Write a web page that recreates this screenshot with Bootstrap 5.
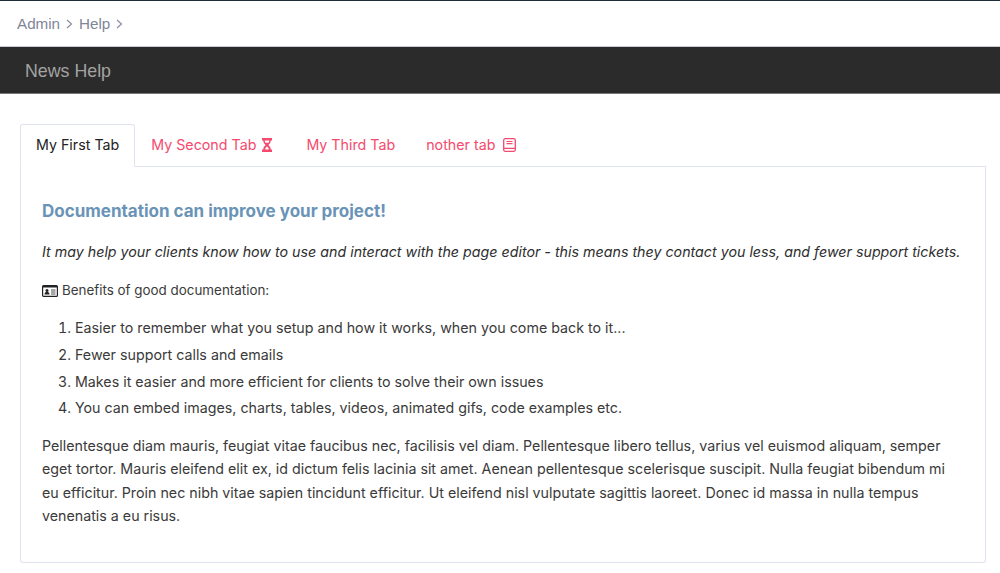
<!doctype html>
<html lang="en"><head><meta charset="utf-8">
<title>News Help</title>
<link href="https://cdn.jsdelivr.net/npm/bootstrap@5.3.0/dist/css/bootstrap.min.css" rel="stylesheet">
<style>
body{font-family:"Inter","Liberation Sans",sans-serif;font-size:14.25px;line-height:23.4px;color:#3a3a3a;background:#fff;overflow:hidden;height:573px}
.top-rule{height:1px;background:#1d2d3a}
.crumbs{height:45px;font-family:"Liberation Sans",sans-serif;font-size:15.2px;color:#7f8598;padding:1px 0 0 17px}
.crumbs svg{margin:0 6px 0 6px}
.head-bar{height:48px;background:#2b2b2b;border-top:1px solid #c9cdd3;border-bottom:1px solid #777;font-family:"Liberation Sans",sans-serif;font-size:17.8px;color:#a3a3a3;padding:4px 0 0 25px}
.page-wrap{padding:30px 14px 0 20px}
.tabs-row{--bs-nav-tabs-border-color:#dfe3ee;--bs-nav-tabs-link-active-border-color:#dfe3ee #dfe3ee #fff;--bs-nav-tabs-border-radius:3px}
.tabs-row .nav-link{color:#f44a6e;padding:6px 15px 8px;height:43px;line-height:25px;font-size:14.25px;border-width:1px;display:flex;align-items:center;gap:6px;margin-bottom:-1px}
.tabs-row .nav-link.active{color:#222}
.tabs-row .wait-tab{padding-right:17px}
.tabs-row .third-tab{padding-right:14px}
.tabs-row .book-tab{gap:8px}
.tab-box{border:1px solid #dfe3ee;border-top:0;border-radius:0 0 3px 3px;height:396px;padding:32px 20px 0 21px}
.doc-title{font-size:17px;font-weight:700;color:#6a94b7;line-height:24px;margin:0 0 17px}
.lede{font-style:italic;color:#2e2e2e;margin:0 0 16px}
.benefit{margin:0 0 13.500px;font-size:13.4px;display:flex;align-items:center;gap:4px}
.doc-list{margin:0 0 11px;padding-left:33px}
.doc-list li{height:26.700px}
.doc-body{margin:0}
</style></head>
<body>
<div class="top-rule"></div>
<div class="crumbs d-flex align-items-center">Admin<svg width="7" height="10" viewBox="0 0 7 10"><path d="M1 1l4.500 4L1 9" fill="none" stroke="#8a8f9e" stroke-width="1.200"/></svg>Help<svg width="7" height="10" viewBox="0 0 7 10"><path d="M1 1l4.500 4L1 9" fill="none" stroke="#8a8f9e" stroke-width="1.200"/></svg></div>
<div class="head-bar d-flex align-items-center">News Help</div>
<div class="page-wrap">
<ul class="nav nav-tabs tabs-row">
<li class="nav-item"><a class="nav-link active" href="#">My First Tab</a></li>
<li class="nav-item"><a class="nav-link wait-tab" href="#">My Second Tab <svg width="10" height="14" viewBox="0 0 11 14" preserveAspectRatio="none"><path d="M0 0h11v2.500H9.600c0 2-1 3.400-2.600 4.500 1.600 1.100 2.600 2.500 2.600 4.500H11V14H0v-2.500h1.400C1.400 9.500 2.400 8.100 4 7 2.400 5.900 1.400 4.500 1.400 2.500H0z M3 2.500C3 3.500 3.300 4.200 3.800 4.700h3.400C7.700 4.200 8 3.500 8 2.500z M3.400 11.500h4.200C7.400 10.200 6.500 9.200 5.500 8.500 4.500 9.200 3.600 10.200 3.400 11.500z" fill="#f44a6e" fill-rule="evenodd"/></svg></a></li>
<li class="nav-item"><a class="nav-link third-tab" href="#">My Third Tab</a></li>
<li class="nav-item"><a class="nav-link book-tab" href="#">nother tab <svg width="13" height="14" viewBox="0 0 13 14"><rect x=".7" y=".7" width="11.600" height="12.600" rx="1.500" fill="none" stroke="#f44a6e" stroke-width="1.300"/><path d="M3.500 3.500h6M3.500 5.700h6M1 10.300h11.500" stroke="#f44a6e" stroke-width="1.200"/></svg></a></li>
</ul>
<div class="tab-box">
<h5 class="doc-title">Documentation can improve your project!</h5>
<p class="lede">It may help your clients know how to use and interact with the page editor - this means they contact you less, and fewer support tickets.</p>
<p class="benefit"><svg width="16" height="12" viewBox="0 0 16 12"><rect x=".6" y=".6" width="14.800" height="10.800" rx="1" fill="none" stroke="#222" stroke-width="1.200"/><rect x="1" y="1" width="14" height="1.500" fill="#222"/><circle cx="5" cy="5.500" r="1.500" fill="#222"/><path d="M2.500 9.500c0-2 1-2.500 2.500-2.500s2.500.5 2.500 2.500z" fill="#222"/><path d="M9 5h4.500M9 7h4.500M9 9h4.500" stroke="#222" stroke-width=".8"/></svg>Benefits of good documentation:</p>
<ol class="doc-list">
<li>Easier to remember what you setup and how it works, when you come back to it...</li>
<li>Fewer support calls and emails</li>
<li>Makes it easier and more efficient for clients to solve their own issues</li>
<li>You can embed images, charts, tables, videos, animated gifs, code examples etc.</li>
</ol>
<p class="doc-body">Pellentesque diam mauris, feugiat vitae faucibus nec, facilisis vel diam. Pellentesque libero tellus, varius vel euismod aliquam, semper eget tortor. Mauris eleifend elit ex, id dictum felis lacinia sit amet. Aenean pellentesque scelerisque suscipit. Nulla feugiat bibendum mi eu efficitur. Proin nec nibh vitae sapien tincidunt efficitur. Ut eleifend nisl vulputate sagittis laoreet. Donec id massa in nulla tempus venenatis a eu risus.</p>
</div>
</div>
</body></html>
